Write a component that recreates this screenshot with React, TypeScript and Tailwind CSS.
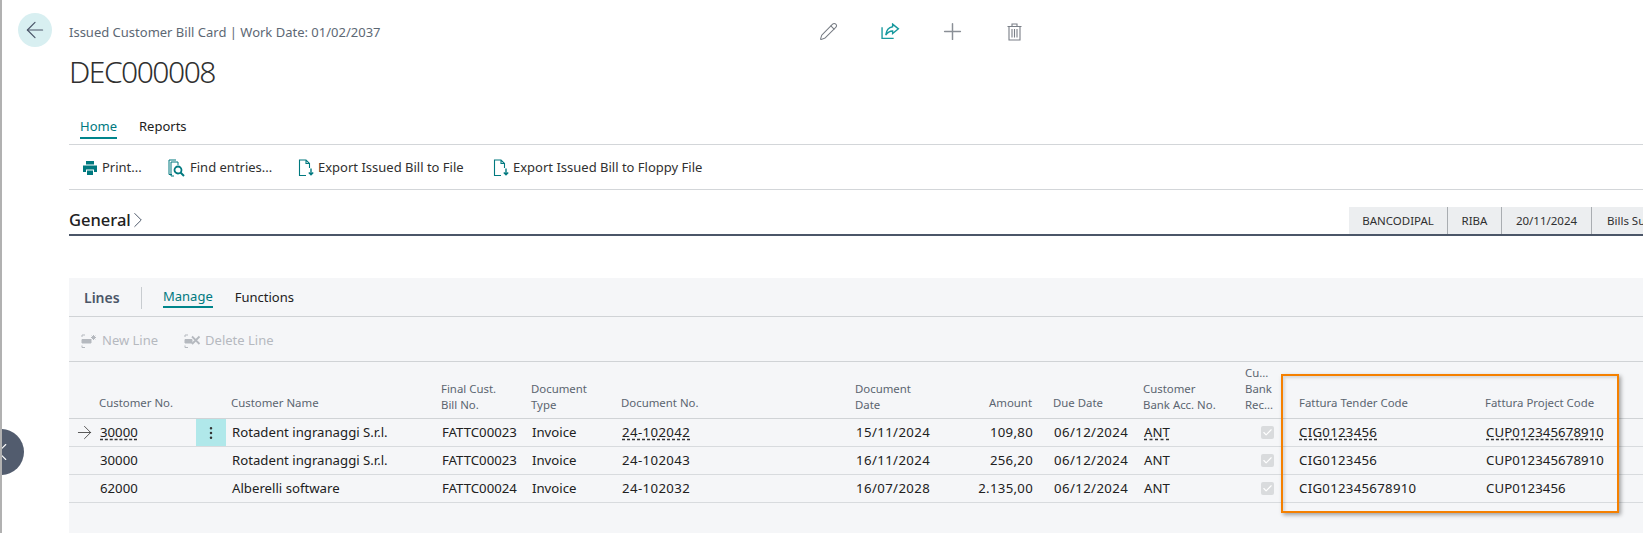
import React from 'react';
import { ArrowLeft, ArrowRight, Check, ChevronLeft, ChevronRight, EllipsisVertical, Pencil, Plus } from 'lucide-react';

const FONT = "font-['Noto_Sans','Open_Sans',sans-serif]";

const GRID = 'grid grid-cols-[31px_96px_30px_216px_90px_90px_234px_120px_57px_111px_102px_54px_186px_1fr]';

interface BillLine {
  customerNo: string;
  name: string;
  finalBill: string;
  docNo: string;
  docDate: string;
  amount: string;
  tender: string;
  project: string;
  current?: boolean;
}

const lines: BillLine[] = [
  { customerNo: '30000', name: 'Rotadent ingranaggi S.r.l.', finalBill: 'FATTC00023', docNo: '24-102042', docDate: '15/11/2024', amount: '109,80', tender: 'CIG0123456', project: 'CUP012345678910', current: true },
  { customerNo: '30000', name: 'Rotadent ingranaggi S.r.l.', finalBill: 'FATTC00023', docNo: '24-102043', docDate: '16/11/2024', amount: '256,20', tender: 'CIG0123456', project: 'CUP012345678910' },
  { customerNo: '62000', name: 'Alberelli software', finalBill: 'FATTC00024', docNo: '24-102032', docDate: '16/07/2028', amount: '2.135,00', tender: 'CIG012345678910', project: 'CUP0123456' },
];

const DocIcon = () => (
  <svg width="16" height="18" viewBox="0 0 16 18" fill="none" stroke="#00797f" strokeWidth="1.1">
    <path d="M8 16.5H1.5V1h6.5l3.5 3.5V9M8 1v3.5h3.5" />
    <path d="M13 9.5v6M10.8 13.500l2.200 2.300 2.200-2.300" strokeWidth="1.4" />
  </svg>
);

const PrintIcon = () => (
  <svg width="16" height="16" viewBox="0 0 16 16" fill="#00797f">
    <path d="M4 1h8v3.500H4z" />
    <path d="M1 5.500h14v6.500h-3V9.500H4V12H1z" />
    <path d="M5 10.500h6V15H5z" />
  </svg>
);

const FindIcon = () => (
  <svg width="18" height="18" viewBox="0 0 18 18" fill="none" stroke="#00797f">
    <path d="M1 1h7M1 1v14.500h3" strokeWidth="1" />
    <path d="M3 3h7v3M3 3v14h3" strokeWidth="1" />
    <circle cx="10" cy="11" r="3.500" strokeWidth="1.800" />
    <path d="M12.500 13.500l3.500 3.500" strokeWidth="2" />
  </svg>
);

const ShareIcon = () => (
  <svg width="19" height="17" viewBox="0 0 18 16" fill="none" stroke="#17999e" strokeWidth="1.3">
    <path d="M1 4v10.500h11" />
    <path d="M11 1l5.500 4.500L11 10V7.500C8 7.500 6 9 4.500 11.500 5 7 7.500 4 11 3.500z" />
  </svg>
);

const TrashIcon = () => (
  <svg width="15" height="18" viewBox="0 0 15 18" fill="none" stroke="#7a7f87" strokeWidth="1.1">
    <path d="M0.500 3.500h14M5 3.500V1h5v2.500" />
    <path d="M2 3.500V17h11V3.500" />
    <path d="M5 6v8.500M7.500 6v8.500M10 6v8.500" />
  </svg>
);

const NewLineIcon = () => (
  <svg width="17" height="14" viewBox="0 0 17 14" fill="none" stroke="#b5b9bf" strokeWidth="1">
    <path d="M1 5.500h9v3.500H1z" fill="#b5b9bf" />
    <path d="M1 3V1h3M1 11.500v2h3" />
    <path d="M12.500 1v5M10 3.500h5M10.700 1.700l3.600 3.600M14.300 1.700l-3.600 3.600" />
  </svg>
);

const DeleteLineIcon = () => (
  <svg width="17" height="14" viewBox="0 0 17 14" fill="none" stroke="#b5b9bf">
    <path d="M1 5.500h7v3.500H1z" fill="#b5b9bf" strokeWidth="1" />
    <path d="M1 3V1h3M1 11.500v2h3" strokeWidth="1" />
    <path d="M8 2.500l7.500 7.500M15.500 2.500L8 10" strokeWidth="1.800" />
  </svg>
);

const ActionButton = ({ icon, label, className }: { icon: React.ReactNode; label: string; className: string }) => (
  <div className={`flex items-center gap-[4px] ${className}`}>
    {icon}
    <span>{label}</span>
  </div>
);

const HeaderCell = ({ children, tall, className = '' }: { children: React.ReactNode; tall?: boolean; className?: string }) => (
  <div className={`-ml-px flex flex-col justify-end text-[11.400px] leading-[16px] text-[#5b6570] ${tall ? 'pb-[5px]' : 'pb-[7px]'} ${className}`}>{children}</div>
);

const Link = ({ children }: { children: React.ReactNode }) => (
  <span className="underline decoration-dashed decoration-[#333] underline-offset-2">{children}</span>
);

export default function App() {
  return (
    <div className={`relative h-[533px] w-[1643px] overflow-hidden border-l-2 border-[#b1b1b1] bg-white text-[#212121] ${FONT}`}>
      {/* Page header */}
      <div className="flex h-[111px] pl-[16px] pt-[13px]">
        <div className="flex h-[34px] w-[34px] shrink-0 items-center justify-center rounded-full bg-[#d8eff1]">
          <ArrowLeft size={26} strokeWidth={1.100} className="text-[#4a5568]" />
        </div>
        <div className="ml-[17px] w-[728px] shrink-0">
          <div className="pt-[10px] text-[13px] leading-[18px] text-[#5d6874]">Issued Customer Bill Card | Work Date: 01/02/2037</div>
          <div className="mt-[12px] text-[30px] font-light leading-[38px] tracking-[-1.500px] text-[#303030]">DEC000008</div>
        </div>
        <div className="flex h-[34px] items-center pt-[3px]">
          <div className="flex w-[62px] justify-center"><Pencil size={19} strokeWidth={1.300} className="text-[#777c84]" /></div>
          <div className="flex w-[62px] justify-center"><ShareIcon /></div>
          <div className="flex w-[62px] justify-center"><Plus size={27} strokeWidth={1.300} className="text-[#8a8f96]" /></div>
          <div className="flex w-[62px] justify-center"><TrashIcon /></div>
        </div>
      </div>

      <div className="ml-[67px]">
        {/* Tabs */}
        <div className="flex h-[34px] items-start gap-[22px] border-b border-[#d3d6d9] pl-[11px] pt-[6px] text-[13px] leading-[19px]">
          <div className="border-b-2 border-[#00858b] pb-[1px] text-[#00797f]">Home</div>
          <div>Reports</div>
        </div>

        {/* Actions */}
        <div className="flex h-[45px] items-center border-b border-[#d3d6d9] pl-[13px] pt-[1px] text-[13px] text-[#303030]">
          <ActionButton icon={<PrintIcon />} label="Print..." className="w-[86px]" />
          <ActionButton icon={<FindIcon />} label="Find entries..." className="w-[130px]" />
          <ActionButton icon={<DocIcon />} label="Export Issued Bill to File" className="w-[195px]" />
          <ActionButton icon={<DocIcon />} label="Export Issued Bill to Floppy File" className="w-[232px]" />
        </div>

        {/* General fast tab */}
        <div className="flex h-[46px] items-end justify-between border-b-2 border-[#4b5668]">
          <div className="flex items-center pb-[1px] text-[16.500px] font-medium leading-[22px]">
            General
            <ChevronRight size={26} strokeWidth={0.900} className="-ml-[6px] text-[#4b5668]" />
          </div>
          <div className="flex h-[27px] text-[11.500px] text-[#303030]">
            <div className="flex w-[99px] items-center justify-center border-r border-[#a9adb1] bg-[#eceef0]">BANCODIPAL</div>
            <div className="flex w-[54px] items-center justify-center border-r border-[#a9adb1] bg-[#eceef0]">RIBA</div>
            <div className="flex w-[90px] items-center justify-center border-r border-[#a9adb1] bg-[#eceef0]">20/11/2024</div>
            <div className="flex w-[51px] items-center overflow-hidden whitespace-nowrap bg-[#eceef0] pl-[15px]">Bills Su</div>
          </div>
        </div>

        {/* Lines part */}
        <div className="mt-[42px] h-[255px] bg-[#f5f6f8]">
          <div className="flex h-[39px] items-center border-b border-[#d0d3d6] pl-[15px] pt-[1px] text-[13px]">
            <span className="w-[57px] text-[14px] font-semibold text-[#4b5668]">Lines</span>
            <span className="h-[22px] w-px bg-[#c8ccd0]" />
            <span className="ml-[21px] border-b-2 border-[#00858b] text-[#00797f]">Manage</span>
            <span className="ml-[22px]">Functions</span>
          </div>
          <div className="flex h-[45px] items-center gap-[26px] border-b border-[#d0d3d6] pl-[12px] pt-[3px] text-[13px] text-[#b5b9bf]">
            <ActionButton icon={<NewLineIcon />} label="New Line" className="" />
            <ActionButton icon={<DeleteLineIcon />} label="Delete Line" className="" />
          </div>

          {/* Table */}
          <div className={`${GRID} h-[57px] border-b border-[#d0d3d6]`}>
            <div />
            <HeaderCell>Customer No.</HeaderCell>
            <div />
            <HeaderCell className="pl-[6px]">Customer Name</HeaderCell>
            <HeaderCell tall>Final Cust.<br />Bill No.</HeaderCell>
            <HeaderCell tall>Document<br />Type</HeaderCell>
            <HeaderCell>Document No.</HeaderCell>
            <HeaderCell tall>Document<br />Date</HeaderCell>
            <HeaderCell className="items-end pr-[1px]">Amount</HeaderCell>
            <HeaderCell className="pl-[21px]">Due Date</HeaderCell>
            <HeaderCell tall>Customer<br />Bank Acc. No.</HeaderCell>
            <HeaderCell tall>Cu...<br />Bank<br />Rec...</HeaderCell>
            <HeaderCell>Fattura Tender Code</HeaderCell>
            <HeaderCell>Fattura Project Code</HeaderCell>
          </div>
          {lines.map((l) => (
            <div key={l.docNo} className={`${GRID} h-[28px] items-center border-b border-[#d8dbde] text-[13.200px]`}>
              <div className="flex justify-center">{l.current && <ArrowRight size={21} strokeWidth={1} className="text-[#444]" />}</div>
              <div>{l.current ? <Link>{l.customerNo}</Link> : l.customerNo}</div>
              <div className={`flex h-full items-center justify-center ${l.current ? 'bg-[#b0e8ea]' : ''}`}>
                {l.current && <EllipsisVertical size={16} strokeWidth={1.800} className="text-[#333]" />}
              </div>
              <div className="pl-[6px]">{l.name}</div>
              <div>{l.finalBill}</div>
              <div>Invoice</div>
              <div className="tracking-[0.400px]">{l.current ? <Link>{l.docNo}</Link> : l.docNo}</div>
              <div className="tracking-[0.400px]">{l.docDate}</div>
              <div className="text-right tracking-[0.300px]">{l.amount}</div>
              <div className="pl-[21px] tracking-[0.400px]">06/12/2024</div>
              <div>{l.current ? <Link>ANT</Link> : 'ANT'}</div>
              <div className="flex justify-end pr-[26px]">
                <span className="flex h-[13px] w-[13px] items-center justify-center rounded-[2px] bg-[#d9dbdd]">
                  <Check size={11} strokeWidth={2.500} className="text-white" />
                </span>
              </div>
              <div className="-ml-px tracking-[0.300px]">{l.current ? <Link>{l.tender}</Link> : l.tender}</div>
              <div className="tracking-[0.100px]">{l.current ? <Link>{l.project}</Link> : l.project}</div>
            </div>
          ))}
        </div>
      </div>

      {/* Highlight drawn over the screenshot */}
      <div className="absolute left-[1279px] top-[374px] h-[139px] w-[338px] border-2 border-[#f58000] shadow-[2px_2px_4px_rgba(0,0,0,0.35),inset_2px_2px_3px_rgba(0,0,0,0.12)]" />

      {/* Collapse handle */}
      <div className="absolute left-[-24px] top-[429px] flex h-[46px] w-[46px] items-center justify-end rounded-full bg-[#525c6e] pr-[7px]">
        <ChevronLeft size={30} strokeWidth={0.900} className="text-white" />
      </div>
    </div>
  );
}
